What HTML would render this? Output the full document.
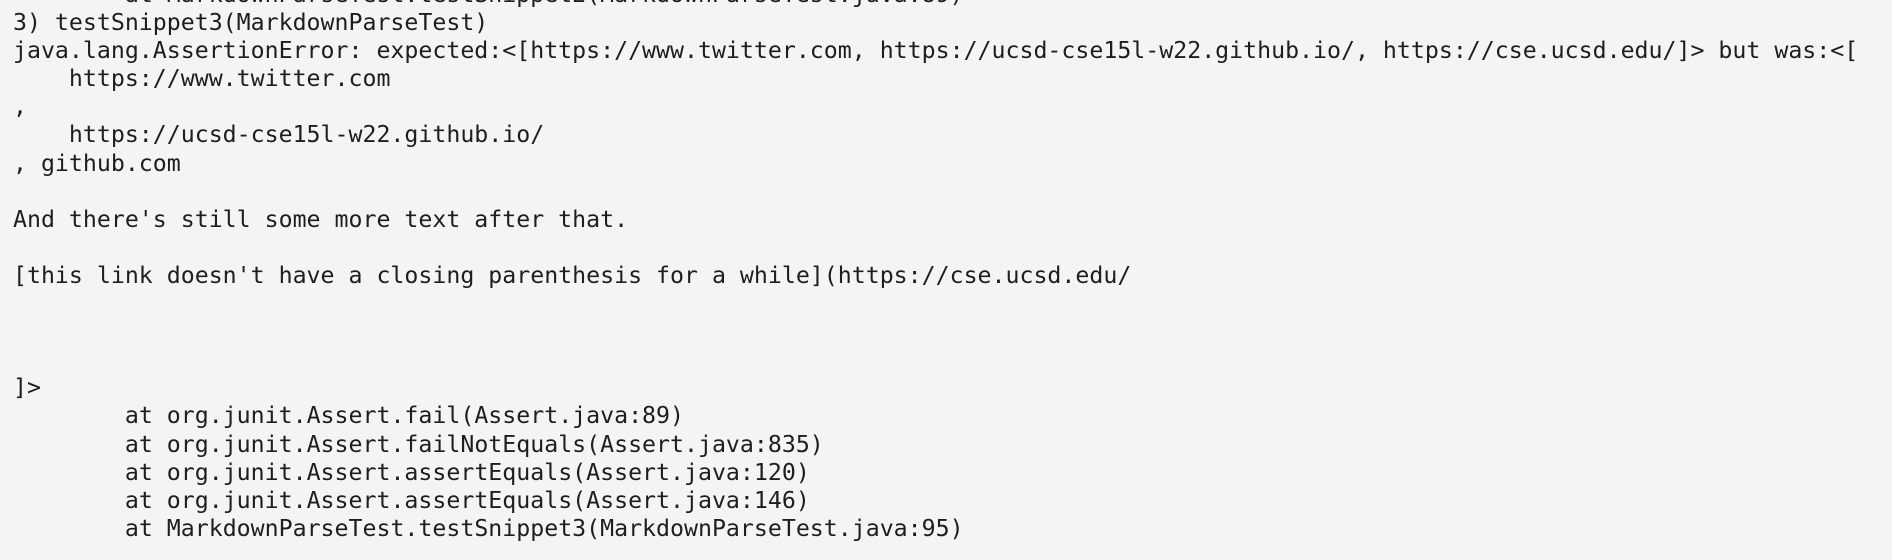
<!DOCTYPE html>
<html><head><meta charset="utf-8"><style>
html,body{margin:0;padding:0;background:#f4f4f4;width:1892px;height:560px;overflow:hidden}
pre{margin:0;position:absolute;left:13px;top:-19px;font-family:"DejaVu Sans Mono","Liberation Mono",monospace;font-size:23.23px;line-height:28.1px;color:#1e1e1e;tab-size:8;-moz-tab-size:8}
</style></head><body><pre>	at MarkdownParseTest.testSnippet2(MarkdownParseTest.java:89)
3) testSnippet3(MarkdownParseTest)
java.lang.AssertionError: expected:&lt;[https://www.twitter.com, https://ucsd-cse15l-w22.github.io/, https://cse.ucsd.edu/]&gt; but was:&lt;[
    https://www.twitter.com
,
    https://ucsd-cse15l-w22.github.io/
, github.com

And there's still some more text after that.

[this link doesn't have a closing parenthesis for a while](https://cse.ucsd.edu/



]&gt;
	at org.junit.Assert.fail(Assert.java:89)
	at org.junit.Assert.failNotEquals(Assert.java:835)
	at org.junit.Assert.assertEquals(Assert.java:120)
	at org.junit.Assert.assertEquals(Assert.java:146)
	at MarkdownParseTest.testSnippet3(MarkdownParseTest.java:95)
</pre></body></html>
